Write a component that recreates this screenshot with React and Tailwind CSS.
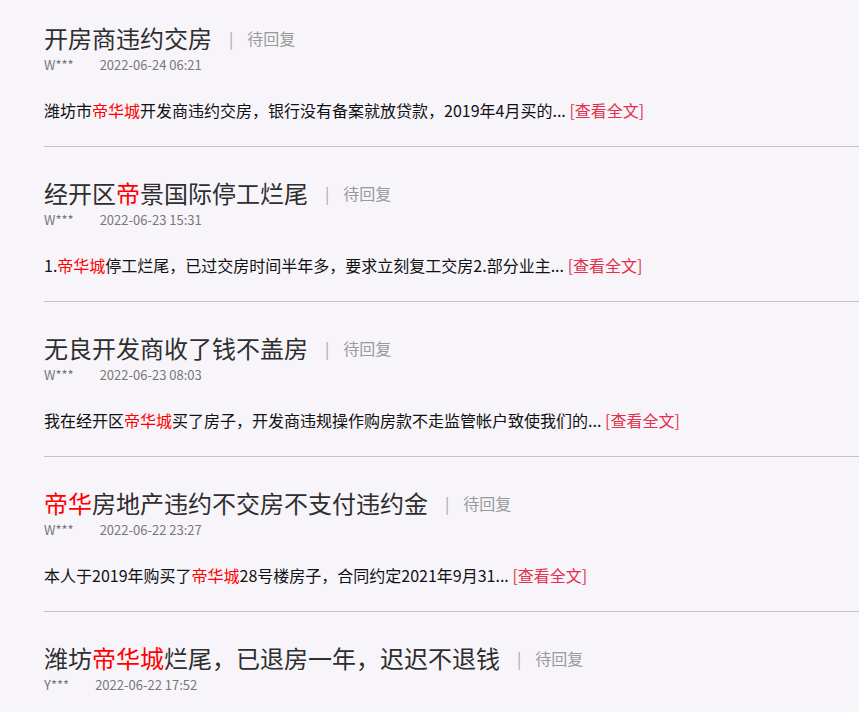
import React from "react";

// list of complaint posts
const posts = [
  {
    title: [{ t: "开房商违约交房" }],
    user: "W***",
    time: "2022-06-24 06:21",
    body: [{ t: "潍坊市" }, { t: "帝华城", red: true }, { t: "开发商违约交房，银行没有备案就放贷款，2019年4月买的..." }],
  },
  {
    title: [{ t: "经开区" }, { t: "帝", red: true }, { t: "景国际停工烂尾" }],
    user: "W***",
    time: "2022-06-23 15:31",
    body: [{ t: "1." }, { t: "帝华城", red: true }, { t: "停工烂尾，已过交房时间半年多，要求立刻复工交房2.部分业主..." }],
  },
  {
    title: [{ t: "无良开发商收了钱不盖房" }],
    user: "W***",
    time: "2022-06-23 08:03",
    body: [{ t: "我在经开区" }, { t: "帝华城", red: true }, { t: "买了房子，开发商违规操作购房款不走监管帐户致使我们的..." }],
  },
  {
    title: [{ t: "帝华", red: true }, { t: "房地产违约不交房不支付违约金" }],
    user: "W***",
    time: "2022-06-22 23:27",
    body: [{ t: "本人于2019年购买了" }, { t: "帝华城", red: true }, { t: "28号楼房子，合同约定2021年9月31..." }],
  },
  {
    title: [{ t: "潍坊" }, { t: "帝华城", red: true }, { t: "烂尾，已退房一年，迟迟不退钱" }],
    user: "Y***",
    time: "2022-06-22 17:52",
    body: null,
  },
];

function Parts({ parts }) {
  return parts.map((p, i) =>
    p.red ? (
      <span key={i} className="text-[#ff0000]">{p.t}</span>
    ) : (
      <span key={i}>{p.t}</span>
    )
  );
}

export default function App() {
  return (
    <div className="h-screen bg-[#f7f5f9] pl-11 font-['Microsoft_YaHei','Noto_Sans_CJK_SC',sans-serif] overflow-hidden">
      {posts.map((post, i) => (
        <div
          key={i}
          className={
            (i === 0 ? "pt-5" : "pt-[28px]") + " pb-6 border-b border-[#c4c2c6]"
          }
        >
          {/* title row */}
          <div className="flex items-center h-9">
            <h2 className="text-[24px] leading-9 text-[#2e2e2e] font-normal whitespace-nowrap">
              <Parts parts={post.title} />
            </h2>
            <span className="ml-[17px] text-[16px] text-[#a8a8a8]">|</span>
            <span className="ml-[14px] text-[16px] text-[#999]">待回复</span>
          </div>

          {/* meta */}
          <div className="flex items-center h-[18px] text-[13px] text-[#777] leading-[18px]">
            <span className="mr-[26px]">{post.user}</span>
            <span>{post.time}</span>
          </div>

          {/* summary */}
          {post.body && (
            <p className="mt-6 text-[16px] leading-6 text-[#111] whitespace-nowrap">
              <Parts parts={post.body} />{" "}
              <a href="#" className="text-[#e4304a]">[查看全文]</a>
            </p>
          )}
        </div>
      ))}
    </div>
  );
}
